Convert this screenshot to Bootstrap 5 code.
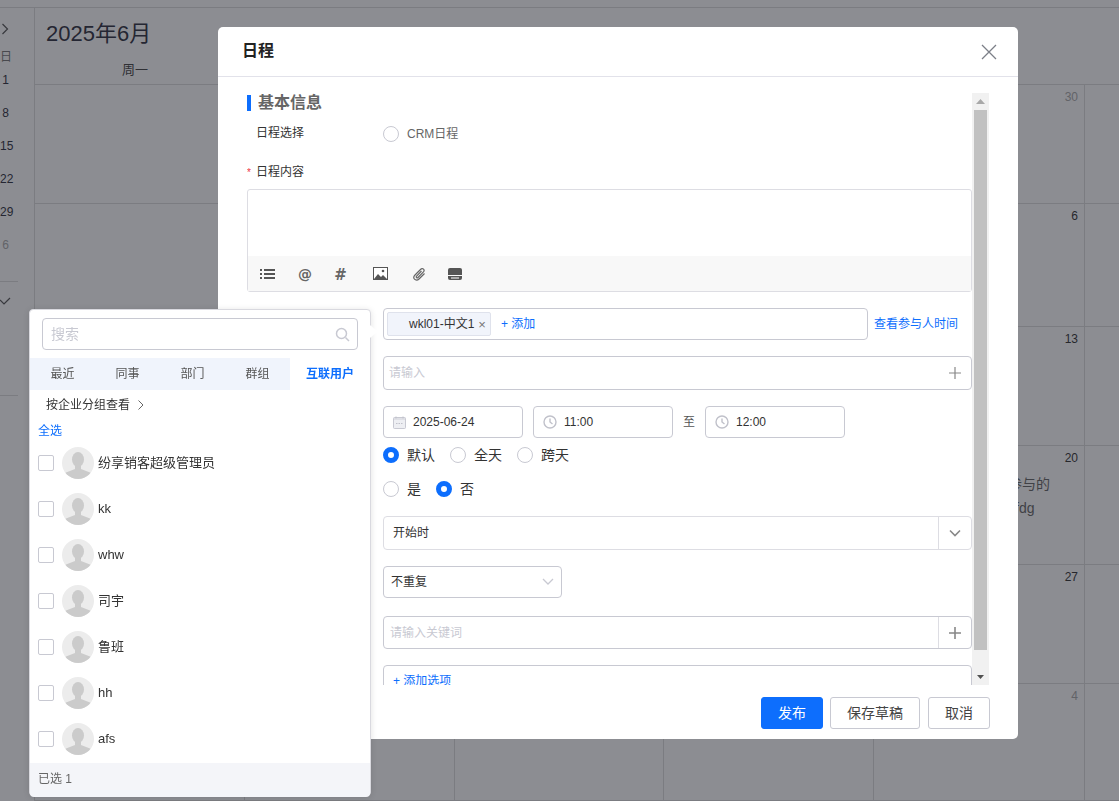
<!DOCTYPE html>
<html lang="zh-CN">
<head>
    <meta charset="UTF-8">
    <meta name="viewport" content="width=device-width, initial-scale=1.0">
    <title>日程</title>
    <link href="https://cdn.jsdelivr.net/npm/bootstrap@5.3.0/dist/css/bootstrap.min.css" rel="stylesheet">
    <style>
        html, body { height: 100%; }
        body { font-family: "Liberation Sans", "Noto Sans CJK SC", sans-serif; font-size: 12px; color: #333; overflow: hidden; background: #fff; }

        /* calendar behind the modal */
        .cal-top { height: 8px; border-bottom: 1px solid #ddd; }
        .cal-wrap { height: 793px; }
        .cal-side { width: 35px; flex: none; border-right: 1px solid #ddd; color: #2f3040; overflow: hidden; }
        .cal-side-arrow { height: 20px; margin-top: 11px; padding-left: 1px; }
        .cal-side-days { margin-top: 7px; width: 11px; }
        .cal-side-day { height: 33px; line-height: 33px; text-align: center; white-space: nowrap; }
        .cal-side-head { height: 22px; line-height: 22px; margin-bottom: -4px; color: #777; }
        .cal-side-muted { color: #aaa; }
        .cal-side-line { width: 18px; border-top: 1px solid #ddd; }
        .cal-side-line-a { margin-top: 19px; }
        .cal-side-line-b { margin-top: 89px; }
        .cal-side-check { display: block; margin: 14px 0 0 -1px; }
        .cal-title { height: 50px; padding: 10px 0 0 11px; font-size: 22px; line-height: 32px; color: #2f3040; }
        .cal-head { height: 26px; width: 200px; text-align: center; font-size: 13px; line-height: 24px; color: #444; }
        .cal-grid { display: grid; grid-template-columns: 210px 210px 209px 210px 211px 1fr; grid-template-rows: 119px 123px 119px 119px 119px 1fr; border-top: 1px solid #ddd; height: 717px; }
        .cal-cell { border-right: 1px solid #ddd; border-bottom: 1px solid #ddd; text-align: right; padding: 5px 6px 0 0; font-size: 12px; line-height: 14px; color: #333; }
        .cal-cell-muted { color: #aaa; }
        .cal-event { text-align: left; padding-left: 134px; margin-top: 7px; font-size: 14px; line-height: 24px; color: #666; white-space: nowrap; }
        .cal-backdrop { position: fixed; inset: 0; background: rgba(25, 27, 37, .5); }

        /* modal */
        .sched-modal { position: absolute; left: 218px; top: 27px; width: 800px; height: 712px; background: #fff; border-radius: 5px; }
        .sched-header { height: 50px; padding: 0 20px 0 24px; border-bottom: 1px solid #e2e2ea; }
        .sched-title { font-size: 16px; font-weight: 700; color: #222; margin-top: -2px; }
        .sched-body { height: 592px; margin: 16px 0 0 29px; width: 742px; }
        .sched-scroll { width: 725px; overflow: hidden; flex: none; }
        .sched-track { width: 17px; flex: none; background: #f1f1f1; margin-left: 0; padding: 0 2px; }
        .sched-arrow { height: 17px; }
        .sched-thumb { height: 540px; background: #c1c1c1; margin-top: 0; }
        .sched-footer { margin: 12px 28px 0 0; gap: 7px; }
        .sched-btn { height: 32px; font-size: 14px; padding: 0; border-radius: 3px; border-color: #c8c9d2; color: #444; background: #fff; }
        .sched-btn-main { width: 62px; background: #0d6efd; border-color: #0d6efd; color: #fff; }
        .sched-btn-draft { width: 90px; }
        .sched-btn-cancel { width: 62px; margin-left: 1px; }

        .sect-title { height: 16px; margin-top: 2px; font-size: 16px; line-height: 16px; font-weight: 700; color: #666; }
        .sect-bar { width: 4px; height: 16px; background: #0d6efd; margin-right: 7px; }
        .row-label { width: 136px; flex: none; padding-left: 9px; font-size: 12px; color: #333; }
        .row-gap { margin-bottom: 16px; }
        .row-first { margin-top: 15px; height: 16px; margin-bottom: 22px; line-height: 13px; }
        .row-first .row-label { margin-top: -2px; }
        .row-txt { font-size: 12px; color: #666; }
        .star { position: absolute; margin-left: -9px; color: #e34; font-size: 10px; line-height: 17px; }
        .label-line { height: 17px; line-height: 17px; margin-bottom: 8px; padding-left: 9px; position: relative; }
        .editor-box { height: 103px; border: 1px solid #dddde3; border-radius: 3px; }
        .editor-tools { height: 35px; margin-top: 66px; background: #f8f8f8; color: #555; }
        .tool-slot { width: 38px; flex: none; }
        .tool-at { font-family: "DejaVu Sans", sans-serif; font-size: 14px; font-weight: 700; color: #666; line-height: 1; }
        .tool-hash { width: 33px; font-size: 15px; margin-top: 3px; }
        .tool-pic { width: 46px; }
        .tool-clip { width: 33px; }

        .fld { border: 1px solid #c8c9d2; border-radius: 4px; background: #fff; }
        .fld-tags { width: 485px; height: 32px; padding: 3px; flex: none; }
        .tag-chip { width: 104px; height: 24px; background: #f1f4fb; border: 1px solid #dfe2ec; border-radius: 2px; padding-left: 21px; color: #333; white-space: nowrap; }
        .tag-x { color: #777; margin-left: 4px; font-size: 13px; line-height: 1; }
        .add-link { color: #0d6efd; margin-left: 10px; }
        .link-time { color: #0d6efd; margin-left: 6px; }
        .fld-wide { height: 34px; width: 589px; padding: 0 5px; }
        .ph { color: #c8c9d2; }
        .fld-date { width: 140px; height: 32px; padding-left: 9px; color: #333; }
        .fld-date svg { margin-right: 7px; }
        .fld-date-mid { margin-left: 10px; }
        .to-txt { width: 32px; text-align: center; color: #555; }
        .time-row { height: 32px; margin-bottom: 9px; }
        .radio-row { height: 16px; font-size: 14px; color: #333; line-height: 16px; }
        .radio-row .form-check-input { width: 16px; height: 16px; margin: 0 8px 0 0; border-color: #c8c9d2; flex: none; }
        .radio-row .form-check-input:checked { background-color: #fff; background-image: none; border: 5px solid #0d6efd; }
        .radio-row span { margin-right: 15px; }
        .radio-row-2 { margin: 18px 0 19px; }
        .radio-row-2 span { margin-right: 15px; }
        .fld-light { border-color: #dddde3; height: 34px; width: 589px; }
        .fld-kw { border-color: #c8c9d2; height: 33px; width: 589px; }
        .fld-main { padding-left: 9px; }
        .fld-main-ph { padding-left: 6px; }
        .fld-side { width: 33px; flex: none; border-left: 1px solid #dddde3; }
        .fld-select { width: 179px; height: 32px; padding: 0 7px; color: #333; }
        .row-gap-select { margin-bottom: 18px; }
        .fld-opts { height: 60px; width: 589px; padding: 6px 9px; color: #0d6efd; }

        /* people picker */
        .picker { position: absolute; left: 29px; top: 309px; width: 342px; height: 487px; background: #fff; border: 1px solid #d9d9df; border-radius: 4px; box-shadow: 0 1px 6px rgba(0, 0, 0, .12); }
        .picker-tip { position: absolute; right: -5px; top: 17px; width: 9px; height: 9px; background: #fff; transform: rotate(45deg); }
        .picker-search { height: 32px; margin: 8px 12px 8px 12px; padding: 0 7px 0 8px; font-size: 14px; }
        .picker-tabs { height: 32px; }
        .picker-tab { width: 65px; flex: none; background: #f0f4fc; text-align: center; color: #555; line-height: 32px; }
        .picker-tab-on { flex: 1; background: #fff; color: #0d6efd; font-weight: 700; }
        .picker-group { height: 30px; padding-left: 16px; color: #333; }
        .picker-all { height: 16px; margin-top: 3px; padding-left: 8px; line-height: 16px; color: #0d6efd; }
        .picker-list { height: 316px; margin-top: 8px; padding-left: 8px; font-size: 13px; }
        .picker-row { height: 46px; padding-bottom: 14px; align-items: center; }
        .picker-row .form-check-input { width: 16px; height: 16px; margin: 0 8px 0 0; border-color: #c8c9d2; border-radius: 2px; flex: none; }
        .picker-row svg { flex: none; margin-right: 4px; }
        .picker-foot { height: 34px; background: #f4f5f9; color: #666; padding-left: 8px; line-height: 32px; border-radius: 0 0 4px 4px; }
    </style>
</head>
<body>

<!-- Calendar behind -->
<div class="cal-top"></div>
<div class="d-flex cal-wrap">
    <div class="cal-side">
        <div class="cal-side-arrow">
            <svg width="8" height="12" viewBox="0 0 8 12" fill="none" stroke="#555" stroke-width="1.2"><path d="M1.5 1l5 5-5 5"/></svg>
        </div>
        <div class="cal-side-days">
            <div class="cal-side-head text-center">日</div>
            <div class="cal-side-day">1</div>
            <div class="cal-side-day">8</div>
            <div class="cal-side-day">15</div>
            <div class="cal-side-day">22</div>
            <div class="cal-side-day">29</div>
            <div class="cal-side-day cal-side-muted">6</div>
        </div>
        <div class="cal-side-line cal-side-line-a"></div>
        <svg class="cal-side-check" width="12" height="10" viewBox="0 0 12 10" fill="none" stroke="#555" stroke-width="1.2"><path d="M1 4l4 4 6-6"/></svg>
        <div class="cal-side-line cal-side-line-b"></div>
    </div>
    <div class="flex-grow-1">
        <div class="cal-title">2025年6月</div>
        <div class="cal-head">周一</div>
        <div class="cal-grid">
            <div class="cal-cell"></div><div class="cal-cell"></div><div class="cal-cell"></div><div class="cal-cell"></div><div class="cal-cell cal-cell-muted">30</div><div class="cal-cell border-end-0"></div>
            <div class="cal-cell"></div><div class="cal-cell"></div><div class="cal-cell"></div><div class="cal-cell"></div><div class="cal-cell">6</div><div class="cal-cell border-end-0"></div>
            <div class="cal-cell"></div><div class="cal-cell"></div><div class="cal-cell"></div><div class="cal-cell"></div><div class="cal-cell">13</div><div class="cal-cell border-end-0"></div>
            <div class="cal-cell"></div><div class="cal-cell"></div><div class="cal-cell"></div><div class="cal-cell"></div><div class="cal-cell">20<div class="cal-event">参与的<br>sfdg</div></div><div class="cal-cell border-end-0"></div>
            <div class="cal-cell"></div><div class="cal-cell"></div><div class="cal-cell"></div><div class="cal-cell"></div><div class="cal-cell">27</div><div class="cal-cell border-end-0"></div>
            <div class="cal-cell"></div><div class="cal-cell"></div><div class="cal-cell"></div><div class="cal-cell"></div><div class="cal-cell cal-cell-muted">4</div><div class="cal-cell border-end-0"></div>
        </div>
    </div>
</div>
<div class="cal-backdrop"></div>

<!-- Schedule modal -->
<div class="sched-modal">
    <div class="sched-header d-flex align-items-center justify-content-between">
        <div class="sched-title">日程</div>
        <svg width="18" height="18" viewBox="0 0 18 18" fill="none" stroke="#7c7f88" stroke-width="1.3"><path d="M2 2l14 14M16 2L2 16"/></svg>
    </div>
    <div class="sched-body d-flex">
        <div class="sched-scroll">
            <div class="sect-title d-flex"><div class="sect-bar"></div>基本信息</div>
            <div class="d-flex align-items-center row-first">
                <div class="row-label">日程选择</div>
                <div class="radio-row d-flex align-items-center"><input class="form-check-input" type="radio" name="crm"><span class="row-txt">CRM日程</span></div>
            </div>
            <div class="label-line"><span class="star">*</span>日程内容</div>
            <div class="editor-box row-gap">
                <div class="editor-tools d-flex align-items-center">
                    <div class="tool-slot d-flex justify-content-center">
                        <svg width="15" height="12" viewBox="0 0 15 12" fill="#555"><rect x="0" y="1" width="2" height="2"/><rect x="0" y="5" width="2" height="2"/><rect x="0" y="9" width="2" height="2"/><rect x="4" y="1" width="11" height="2"/><rect x="4" y="5" width="11" height="2"/><rect x="4" y="9" width="11" height="2"/></svg>
                    </div>
                    <div class="tool-slot text-center tool-at">@</div>
                    <div class="tool-slot text-center tool-at tool-hash">#</div>
                    <div class="tool-slot tool-pic d-flex justify-content-center">
                        <svg width="15" height="13" viewBox="0 0 15 13"><rect x=".5" y=".5" width="14" height="12" fill="#fff" stroke="#555"/><path d="M1 12l4-5 3 3 2-2 4 4z" fill="#555"/><circle cx="10" cy="4" r="1.3" fill="#555"/></svg>
                    </div>
                    <div class="tool-slot tool-clip d-flex justify-content-center">
                        <svg width="13" height="14" viewBox="0 0 13 14" fill="none" stroke="#666" stroke-width="1.2"><path d="M11.5 6.5L6 12c-1.500 1.500-3.500 1.300-4.500.2S.5 9.500 2 8l5.500-5.500c1-1 2.300-1 3-.3s.7 2-.3 3L5 10.500c-.5.500-1.100.5-1.500.1s-.4-1 .1-1.500L8.500 4"/></svg>
                    </div>
                    <div class="tool-slot d-flex justify-content-center">
                        <svg width="14" height="12" viewBox="0 0 14 12" fill="#555"><path d="M2 0h10a2 2 0 0 1 2 2v5H0V2a2 2 0 0 1 2-2z"/><path d="M0 8h14v2a2 2 0 0 1-2 2H2a2 2 0 0 1-2-2z"/><rect x="3" y="9.500" width="8" height="1" fill="#fff"/></svg>
                    </div>
                </div>
            </div>

            <div class="d-flex align-items-center row-gap">
                <div class="row-label"></div>
                <div class="fld fld-tags d-flex align-items-center">
                    <div class="tag-chip d-flex align-items-center">wkl01-中文1<span class="tag-x">×</span></div>
                    <span class="add-link">+ 添加</span>
                </div>
                <span class="link-time">查看参与人时间</span>
            </div>

            <div class="d-flex row-gap">
                <div class="row-label"></div>
                <div class="fld fld-wide d-flex align-items-center justify-content-between">
                    <span class="ph">请输入</span>
                    <svg class="me-1" width="14" height="14" viewBox="0 0 14 14" stroke="#888" stroke-width="1.2"><path d="M7 1v12M1 7h12"/></svg>
                </div>
            </div>

            <div class="d-flex time-row">
                <div class="row-label"></div>
                <div class="fld fld-date d-flex align-items-center">
                    <svg width="13" height="13" viewBox="0 0 13 13"><rect x=".5" y="1.500" width="12" height="11" rx="1" fill="#dfe0e6" stroke="#c8c9d2"/><rect x="1" y="4" width="11" height="8" fill="#eeeff3"/><path d="M3 .5v2M10 .5v2" stroke="#c0c1ca"/><path d="M3 7.500h7" stroke="#c0c1ca" stroke-dasharray="1.500 1"/></svg>
                    2025-06-24
                </div>
                <div class="fld fld-date fld-date-mid d-flex align-items-center">
                    <svg width="14" height="14" viewBox="0 0 14 14" fill="none" stroke="#c0c1ca" stroke-width="1.4"><circle cx="7" cy="7" r="6"/><path d="M7 3.500V7l2.500 2"/></svg>
                    11:00
                </div>
                <div class="to-txt d-flex align-items-center justify-content-center">至</div>
                <div class="fld fld-date d-flex align-items-center">
                    <svg width="14" height="14" viewBox="0 0 14 14" fill="none" stroke="#c0c1ca" stroke-width="1.4"><circle cx="7" cy="7" r="6"/><path d="M7 3.500V7l2.500 2"/></svg>
                    12:00
                </div>
            </div>

            <div class="d-flex">
                <div class="row-label"></div>
                <div class="radio-row d-flex align-items-center">
                    <input class="form-check-input" type="radio" name="span" checked><span>默认</span>
                    <input class="form-check-input" type="radio" name="span"><span>全天</span>
                    <input class="form-check-input" type="radio" name="span"><span>跨天</span>
                </div>
            </div>

            <div class="d-flex radio-row-2">
                <div class="row-label"></div>
                <div class="radio-row d-flex align-items-center">
                    <input class="form-check-input" type="radio" name="yn"><span>是</span>
                    <input class="form-check-input" type="radio" name="yn" checked><span>否</span>
                </div>
            </div>

            <div class="d-flex row-gap">
                <div class="row-label"></div>
                <div class="fld fld-light d-flex">
                    <div class="fld-main flex-grow-1 d-flex align-items-center">开始时</div>
                    <div class="fld-side d-flex align-items-center justify-content-center">
                        <svg width="12" height="8" viewBox="0 0 12 8" fill="none" stroke="#888" stroke-width="1.600"><path d="M1 1.500l5 5 5-5"/></svg>
                    </div>
                </div>
            </div>

            <div class="d-flex row-gap-select">
                <div class="row-label"></div>
                <div class="fld fld-select d-flex align-items-center justify-content-between">
                    不重复
                    <svg width="12" height="8" viewBox="0 0 12 8" fill="none" stroke="#c8c9d2" stroke-width="1.300"><path d="M1 1l5 5 5-5"/></svg>
                </div>
            </div>

            <div class="d-flex row-gap">
                <div class="row-label"></div>
                <div class="fld fld-kw d-flex">
                    <div class="fld-main fld-main-ph flex-grow-1 d-flex align-items-center ph">请输入关键词</div>
                    <div class="fld-side d-flex align-items-center justify-content-center">
                        <svg width="14" height="14" viewBox="0 0 14 14" stroke="#888" stroke-width="1.600"><path d="M7 1v12M1 7h12"/></svg>
                    </div>
                </div>
            </div>

            <div class="d-flex">
                <div class="row-label"></div>
                <div class="fld fld-opts">+ 添加选项</div>
            </div>
        </div>
        <div class="sched-track d-flex flex-column">
            <div class="sched-arrow d-flex align-items-center justify-content-center">
                <svg width="9" height="5" viewBox="0 0 9 5" fill="#a8a8a8"><path d="M4.500 0L9 5H0z"/></svg>
            </div>
            <div class="sched-thumb"></div>
            <div class="sched-arrow d-flex align-items-center justify-content-center mt-auto">
                <svg width="7" height="4" viewBox="0 0 7 4" fill="#505050"><path d="M0 0h7L3.500 4z"/></svg>
            </div>
        </div>
    </div>
    <div class="sched-footer d-flex justify-content-end">
        <button type="button" class="btn sched-btn sched-btn-main">发布</button>
        <button type="button" class="btn sched-btn sched-btn-draft">保存草稿</button>
        <button type="button" class="btn sched-btn sched-btn-cancel">取消</button>
    </div>
</div>

<!-- People picker -->
<div class="picker">
    <div class="picker-tip"></div>
    <div class="fld picker-search d-flex align-items-center justify-content-between">
        <span class="ph">搜索</span>
        <svg width="15" height="15" viewBox="0 0 15 15" fill="none" stroke="#c8c9d2" stroke-width="1.500"><circle cx="6.500" cy="6.500" r="5"/><path d="M10.500 10.500L14 14"/></svg>
    </div>
    <div class="picker-tabs d-flex">
        <div class="picker-tab">最近</div>
        <div class="picker-tab">同事</div>
        <div class="picker-tab">部门</div>
        <div class="picker-tab">群组</div>
        <div class="picker-tab picker-tab-on">互联用户</div>
    </div>
    <div class="picker-group d-flex align-items-center">
        按企业分组查看
        <svg class="ms-2" width="6" height="10" viewBox="0 0 6 10" fill="none" stroke="#666"><path d="M.5.5L5 5 .5 9.500"/></svg>
    </div>
    <div class="picker-all">全选</div>
    <div class="picker-list" id="picker-list"></div>
    <div class="picker-foot">已选 1</div>
</div>

<script src="https://cdn.jsdelivr.net/npm/bootstrap@5.3.0/dist/js/bootstrap.bundle.min.js"></script>
<script>
    // Fill the people list
    const people = ['纷享销客超级管理员', 'kk', 'whw', '司宇', '鲁班', 'hh', 'afs'];
    const avatar = `<svg width="32" height="32" viewBox="0 0 32 32"><clipPath id="av"><circle cx="16" cy="16" r="16"/></clipPath><g clip-path="url(#av)"><rect width="32" height="32" fill="#ececec"/><ellipse cx="16" cy="12.500" rx="6" ry="7.500" fill="#cbcbcb"/><path d="M13 18h6v4l9 3.500c2 1 3 3 3 7H1c0-4 1-6 3-7l9-3.500z" fill="#cbcbcb"/></g></svg>`;
    document.getElementById('picker-list').innerHTML = people.map(name => `
        <div class="picker-row d-flex">
            <input class="form-check-input" type="checkbox">
            ${avatar}
            <span>${name}</span>
        </div>`).join('');
</script>
</body>
</html>
